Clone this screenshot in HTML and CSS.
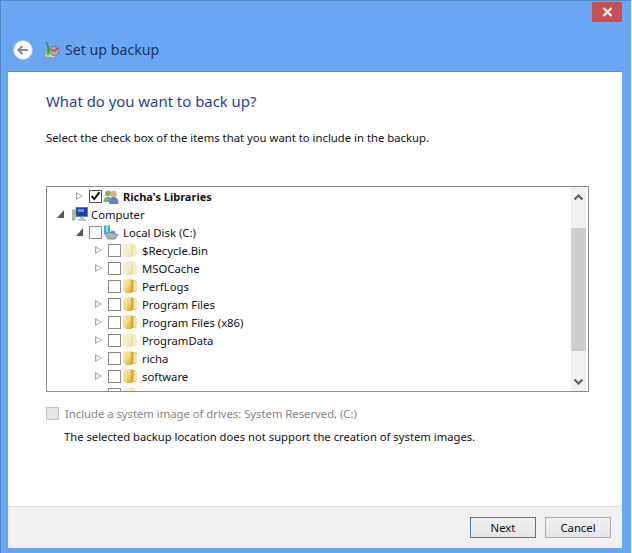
FILE: index.html
```html
<!DOCTYPE html>
<html lang="en">
<head>
<meta charset="utf-8">
<title>Set up backup</title>
<link rel="stylesheet" href="styles.css">
</head>
<body>
<svg class="defs" width="0" height="0" aria-hidden="true">
  <defs>
    <linearGradient id="fold" x1="0" x2="1" y1="0" y2="1">
      <stop offset="0" stop-color="#f9ebb0"/><stop offset=".5" stop-color="#f5da7e"/><stop offset="1" stop-color="#d9a42c"/>
    </linearGradient>
    <linearGradient id="foldpale" x1="0" x2="1" y1="0" y2="1">
      <stop offset="0" stop-color="#faf3d8"/><stop offset=".6" stop-color="#f8eac0"/><stop offset="1" stop-color="#ecdaa4"/>
    </linearGradient>
    <symbol id="folder" viewBox="0 0 14 16">
      <path d="M8 2h4.500l1 1.500V14H8z" fill="#f2cc62"/>
      <path d="M11 3h2v10h-2z" fill="#f9e59c"/>
      <path d="M0 1.500h1.500L8.500 1v14H3L0 13z" fill="url(#fold)"/>
      <path d="M8.500 1v14l1.300-1.500V2z" fill="#c9962a"/>
    </symbol>
    <symbol id="folderpale" viewBox="0 0 14 16">
      <path d="M8 2h4.500l1 1.500V14H8z" fill="#f7ebc2"/>
      <path d="M0 1.500h1.500L8.500 1v14H3L0 13z" fill="url(#foldpale)"/>
      <path d="M8.500 1v14l1.300-1.500V2z" fill="#ead9a6"/>
    </symbol>
  </defs>
</svg>
<main class="window">
  <div class="caption">
    <button class="close" aria-label="Close">
      <svg width="11" height="10" viewBox="0 0 11 10"><path d="M1.500 1l8 8M9.500 1l-8 8" stroke="#fff" stroke-width="2.200" fill="none"/></svg>
    </button>
  </div>
  <header class="navbar">
    <span class="back">
      <svg width="20" height="20" viewBox="0 0 20 20"><circle cx="10" cy="10" r="9.200" fill="#fff" stroke="#dfe6ee" stroke-width=".8"/><path d="M15 10H6M9.500 6 5.500 10l4 4" fill="none" stroke="#8a8a94" stroke-width="2.200"/></svg>
    </span>
    <svg class="appicon" width="16" height="18" viewBox="0 0 16 18">
      <path d="M1 16V10l6-1 8 3-5 5z" fill="#d9d3bf" stroke="#8d8a78" stroke-width=".7"/>
      <circle cx="10.500" cy="10" r="4.800" fill="#a8a0b4" stroke="#6f6a80" stroke-width=".7"/>
      <path d="M7 8.500 10.500 10l3.500-3" stroke="#b5423f" stroke-width="1.300" fill="none"/>
      <path d="M2.500 1 4.500 7l-.4 6" stroke="#2e9c2a" stroke-width="1.800" fill="none"/>
      <path d="M2 11 4 14 6.500 10.500" stroke="#5cc83a" stroke-width="1.300" fill="none"/>
    </svg>
    <h1 class="title">Set up backup</h1>
  </header>
  <div class="panel">
    <section class="content">
      <h2 class="heading">What do you want to back up?</h2>
      <p class="lead">Select the check box of the items that you want to include in the backup.</p>
      <div class="listbox">
        <ul class="tree">
          <li class="row lvl1">
            <span class="tw closed"></span><span class="cb checked"><svg width="11" height="10" viewBox="0 0 11 10"><path d="M1.500 5 4.300 8 9.500 1.200" fill="none" stroke="#111" stroke-width="2"/></svg></span>
            <svg class="ic wide" viewBox="0 0 16 15"><circle cx="5" cy="4.500" r="3" fill="#7faf6a"/><path d="M.5 13c0-4 2-5 4.500-5s4.500 1 4.500 5z" fill="#79ad6e"/><circle cx="10.500" cy="5" r="3.200" fill="#d8b48a"/><path d="M6 15c0-6 2-7 4.500-7s5 1 5 7z" fill="#5b87c4"/></svg>
            <span class="lb strong">Richa's Libraries</span>
          </li>
          <li class="row lvl0">
            <span class="tw open"></span>
            <svg class="ic comp" viewBox="0 0 16 15"><rect x="0" y="3" width="3" height="10" fill="#b9c0bb" stroke="#7d8a84" stroke-width=".6"/><rect x="4" y="0.500" width="11.500" height="9" fill="#1a3fa8" stroke="#67748c" stroke-width=".8"/><rect x="6" y="2" width="6" height="3" fill="#5c9be0"/><path d="M8 10h4v2h2v2H6v-2h2z" fill="#bcc4cc"/></svg>
            <span class="lb">Computer</span>
          </li>
          <li class="row lvl1">
            <span class="tw open"></span><span class="cb"></span>
            <svg class="ic wide" viewBox="0 0 16 15"><path d="M1 8l8-1 6 3-3 4H5z" fill="#a9b2b8" stroke="#5f6a70" stroke-width=".7"/><rect x="1" y="0.500" width="2.500" height="8" fill="#27b7d6"/><rect x="4.500" y="0.500" width="2.500" height="8" fill="#2fb4e0"/><path d="M8 6h4v2.500H8z" fill="#2fa0e0"/></svg>
            <span class="lb">Local Disk (C:)</span>
          </li>
          <li class="row lvl2"><span class="tw closed"></span><span class="cb"></span><svg class="ic"><use href="#folderpale"/></svg><span class="lb">$Recycle.Bin</span></li>
          <li class="row lvl2"><span class="tw closed"></span><span class="cb"></span><svg class="ic"><use href="#folderpale"/></svg><span class="lb">MSOCache</span></li>
          <li class="row lvl2"><span class="tw"></span><span class="cb"></span><svg class="ic"><use href="#folder"/></svg><span class="lb">PerfLogs</span></li>
          <li class="row lvl2"><span class="tw closed"></span><span class="cb"></span><svg class="ic"><use href="#folder"/></svg><span class="lb">Program Files</span></li>
          <li class="row lvl2"><span class="tw closed"></span><span class="cb"></span><svg class="ic"><use href="#folder"/></svg><span class="lb">Program Files (x86)</span></li>
          <li class="row lvl2"><span class="tw closed"></span><span class="cb"></span><svg class="ic"><use href="#folderpale"/></svg><span class="lb">ProgramData</span></li>
          <li class="row lvl2"><span class="tw closed"></span><span class="cb"></span><svg class="ic"><use href="#folder"/></svg><span class="lb">richa</span></li>
          <li class="row lvl2"><span class="tw closed"></span><span class="cb"></span><svg class="ic"><use href="#folder"/></svg><span class="lb">software</span></li>
          <li class="row lvl2"><span class="tw"></span><span class="cb"></span><svg class="ic"><use href="#folderpale"/></svg></li>
        </ul>
        <div class="scrollbar">
          <span class="sb-btn"><svg width="11" height="7" viewBox="0 0 11 7"><path d="M1.500 5.500l4-4 4 4" fill="none" stroke="#606060" stroke-width="2.200"/></svg></span>
          <span class="sb-thumb"></span>
          <span class="sb-btn end"><svg width="11" height="7" viewBox="0 0 11 7"><path d="M1.500 1.500l4 4 4-4" fill="none" stroke="#606060" stroke-width="2.200"/></svg></span>
        </div>
      </div>
      <label class="sysimg"><span class="cb disabled"></span><span>Include a system image of drives: System Reserved, (C:)</span></label>
      <p class="note">The selected backup location does not support the creation of system images.</p>
    </section>
    <footer class="footer">
      <button class="btn default">Next</button>
      <button class="btn">Cancel</button>
    </footer>
  </div>
</main>
</body>
</html>
```

FILE: styles.css
```css
* { box-sizing: border-box; }
html, body { margin: 0; padding: 0; background: #f4efe6; }
body { width: 632px; height: 553px; overflow: hidden; font-family: "Noto Sans", "Open Sans", sans-serif; font-size: 11.3px; color: #111; }
.defs { position: absolute; }
.window { width: 631px; height: 553px; background: #69a7f5; border: 1px solid #5088c8; border-width: 1px 0 0 1px; display: flex; flex-direction: column; padding: 0 9px 5px 7px; }
.caption { height: 21px; display: flex; justify-content: flex-end; }
.close { width: 30px; height: 20px; margin-top: 1px; background: #c75050; border: 0; padding: 0; display: flex; align-items: center; justify-content: center; }
.navbar { height: 49px; display: flex; align-items: center; padding: 6px 0 0 5px; }
.back { display: flex; width: 20px; height: 20px; margin-right: 11px; }
.appicon { margin-right: 5px; }
.title { margin: -1px 0 0; font-size: 14.200px; font-weight: 400; color: #1f3358; }
.panel { flex: 1; display: flex; flex-direction: column; background: #fff; border-top: 1px solid #5b8fd0; }
.content { flex: 1; display: flex; flex-direction: column; padding: 19px 33px 0 38px; }
.heading { margin: 0; font-size: 14.900px; line-height: 21px; font-weight: 400; color: #1f3f98; }
.lead { margin: 18px 0 0; line-height: 16px; }
.listbox { margin-top: 40px; width: 543px; height: 206px; border: 1px solid #8c8c8c; display: flex; overflow: hidden; }
.tree { flex: 1; margin: 0; padding: 0; list-style: none; overflow: hidden; }
.row { display: flex; align-items: center; height: 18px; }
.lvl0 { padding-left: 10px; }
.lvl1 { padding-left: 29px; }
.lvl2 { padding-left: 48px; }
.tw { width: 7px; height: 8px; margin-right: 6px; flex: none; }
.tw.closed { background: #a6a6a6; clip-path: polygon(0 0, 100% 50%, 0 100%, 0 0, 18% 22%, 18% 78%, 78% 50%, 18% 22%); }
.tw.open { background: #595959; clip-path: polygon(100% 0, 100% 100%, 0 100%); }
.cb { width: 13px; height: 13px; border: 1px solid #8a8a8a; background: #fff; flex: none; display: flex; align-items: center; justify-content: center; }
.cb.checked { border-color: #555; }
.cb.disabled { background: #e6e6e6; border-color: #c4c4c4; }
.ic { width: 14px; height: 16px; flex: none; margin: 0 5px 0 2px; }
.ic.wide { width: 16px; height: 15px; margin: 0 4px 0 1px; }
.ic.comp { width: 16px; height: 15px; margin: 0 3px 0 2px; }
.lb { white-space: nowrap; }
.strong { font-weight: 700; font-size: 11px; }
.scrollbar { width: 15px; margin: 0 2px 0 0; flex: none; background: #f0f0f0; display: flex; flex-direction: column; }
.sb-btn { height: 20px; display: flex; align-items: center; justify-content: center; flex: none; }
.sb-thumb { height: 123px; margin-top: 21px; background: #cdcdcd; }
.sb-btn.end { margin-top: auto; }
.sysimg { display: flex; align-items: center; gap: 6px; margin-top: 13px; color: #858585; height: 16px; font-size: 11.25px; }
.note { margin: 8px 0 0 18px; line-height: 16px; font-size: 11.25px; }
.footer { height: 42px; background: #f0f0f0; border-top: 1px solid #dfdfdf; display: flex; justify-content: flex-end; align-items: center; gap: 9px; padding: 0 11px 0 0; }
.btn { width: 66px; height: 21px; padding: 0; font: inherit; color: #111; background: linear-gradient(#f0f0f0, #e5e5e5); border: 1px solid #acacac; }
.btn.default { border: 1px solid #3c7fb1; }
```
